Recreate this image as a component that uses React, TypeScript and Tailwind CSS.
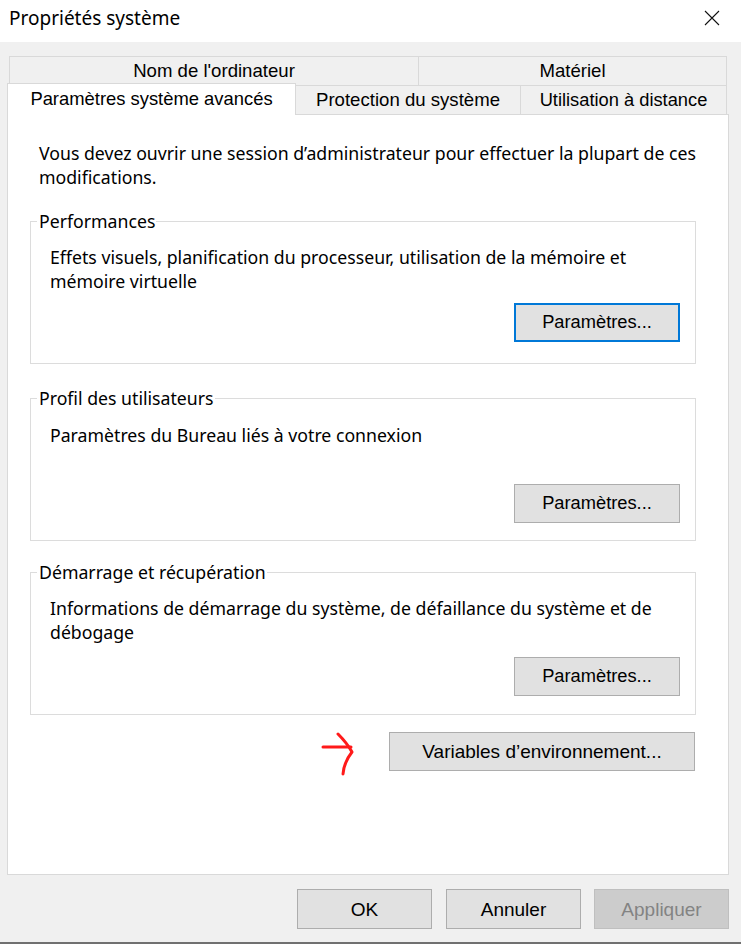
import React from "react";

const seg = { fontFamily: '"Noto Sans", "Open Sans", sans-serif' };
const ms = { fontFamily: '"Liberation Sans", Arial, sans-serif' };

function Btn({ children, focus, disabled, className = "" }: { children: React.ReactNode; focus?: boolean; disabled?: boolean; className?: string }) {
  const base = "flex items-center justify-center leading-none";
  const look = disabled
    ? "bg-[#cccccc] border border-[#bfbfbf] text-[#838383]"
    : focus
    ? "bg-[#e1e1e1] border-2 border-[#0078d7] text-black"
    : "bg-[#e1e1e1] border border-[#adadad] text-black";
  return (
    <div className={`${base} ${look} ${className}`} style={ms}>
      {children}
    </div>
  );
}

function Group({ legend, children, className = "" }: { legend: string; children: React.ReactNode; className?: string }) {
  return (
    <fieldset className={`border border-[#dcdcdc] w-[666px] ml-[22px] ${className}`}>
      <legend className="ml-[6px] pl-[2px] pr-[1px] text-[17.7px] leading-[24px] text-black" style={seg}>
        {legend}
      </legend>
      {children}
    </fieldset>
  );
}

export default function App() {
  return (
    <div className="w-[741px] h-[944px] bg-[#f0f0f0] flex flex-col overflow-hidden">
      {/* Title bar */}
      <div className="h-[42px] bg-white flex items-center justify-between pl-[9px] pr-[21px] shrink-0">
        <span className="text-[19px] text-black leading-none -mt-[6px]" style={seg}>
          Propriétés système
        </span>
        <svg width="16" height="16" viewBox="0 0 16 16" className="-mt-[6px]">
          <path d="M1 1 L15 15 M15 1 L1 15" stroke="#111" strokeWidth="1.1" fill="none" />
        </svg>
      </div>

      <div className="pl-[7px] pt-[14px] flex flex-col">
        {/* Tab row 1 */}
        <div className="flex ml-[2px] h-[29px]" style={ms}>
          <div className="w-[409px] border-l border-t border-[#d9d9d9] flex items-center justify-center text-[18.6px] text-black">
            Nom de l'ordinateur
          </div>
          <div className="w-[309px] border-l border-t border-r border-[#d9d9d9] flex items-center justify-center text-[18.6px] text-black">
            Matériel
          </div>
        </div>
        {/* Tab row 2 */}
        <div className="flex items-end -mt-[2px] -mb-px relative z-10 h-[32px]" style={ms}>
          <div className="w-[289px] h-[32px] bg-white border-l border-t border-r border-[#d9d9d9] flex items-center justify-center text-[18.4px] text-black pb-[2px]">
            Paramètres système avancés
          </div>
          <div className="w-[225px] h-[30px] border-t border-r border-b border-[#d9d9d9] flex items-center justify-center text-[18.6px] text-black">
            Protection du système
          </div>
          <div className="w-[206px] h-[30px] border-t border-r border-b border-[#d9d9d9] flex items-center justify-center text-[18.3px] text-black">
            Utilisation à distance
          </div>
        </div>

        {/* Panel */}
        <div className="w-[722px] h-[761px] bg-white border border-[#d9d9d9] flex flex-col pt-[26px]">
          <p className="pl-[31px] text-[17.7px] leading-[24px] text-black whitespace-nowrap" style={seg}>
            Vous devez ouvrir une session d’administrateur pour effectuer la plupart de ces
            <br />
            modifications.
          </p>

          <Group legend="Performances" className="mt-[20px] h-[155px]">
            <div className="flex flex-col pl-[19px] pr-[15px]">
              <p className="mt-[12px] text-[17.7px] leading-[24px] text-black whitespace-nowrap" style={seg}>
                Effets visuels, planification du processeur, utilisation de la mémoire et
                <br />
                mémoire virtuelle
              </p>
              <div className="flex justify-end mt-[10px]">
                <Btn focus className="w-[166px] h-[39px] text-[18.3px]">Paramètres...</Btn>
              </div>
            </div>
          </Group>

          <Group legend="Profil des utilisateurs" className="mt-[22px] h-[155px]">
            <div className="flex flex-col pl-[19px] pr-[15px]">
              <p className="mt-[13px] text-[17.7px] leading-[24px] text-black whitespace-nowrap" style={seg}>
                Paramètres du Bureau liés à votre connexion
              </p>
              <div className="flex justify-end mt-[37px]">
                <Btn className="w-[166px] h-[39px] text-[18.3px]">Paramètres...</Btn>
              </div>
            </div>
          </Group>

          <Group legend="Démarrage et récupération" className="mt-[19px] h-[155px]">
            <div className="flex flex-col pl-[19px] pr-[15px]">
              <p className="mt-[12px] text-[17.7px] leading-[24px] text-black whitespace-nowrap" style={seg}>
                Informations de démarrage du système, de défaillance du système et de
                <br />
                débogage
              </p>
              <div className="flex justify-end mt-[13px]">
                <Btn className="w-[166px] h-[39px] text-[18.3px]">Paramètres...</Btn>
              </div>
            </div>
          </Group>

          <div className="flex items-start mt-[17px] pl-[313px]">
            <svg width="40" height="46" viewBox="0 0 40 46" className="-mt-[1px]">
              <path d="M2 16 L30 16" stroke="#ff1a1a" strokeWidth="3" strokeLinecap="round" fill="none" />
              <path d="M17 3 Q26 12 31 21 Q23 31 22 43" stroke="#ff1a1a" strokeWidth="3" strokeLinecap="round" strokeLinejoin="round" fill="none" />
            </svg>
            <Btn className="ml-[28px] w-[306px] h-[39px] text-[19px]">Variables d’environnement...</Btn>
          </div>
        </div>

        {/* Bottom buttons */}
        <div className="flex mt-[14px] pl-[290px] gap-[14px]">
          <Btn className="w-[135px] h-[40px] text-[19px]">OK</Btn>
          <Btn className="w-[135px] h-[40px] text-[19px]">Annuler</Btn>
          <Btn disabled className="w-[135px] h-[40px] -ml-px text-[19px]">Appliquer</Btn>
        </div>
      </div>

      <div className="mt-auto h-[2px] bg-[#707070]" />
    </div>
  );
}
